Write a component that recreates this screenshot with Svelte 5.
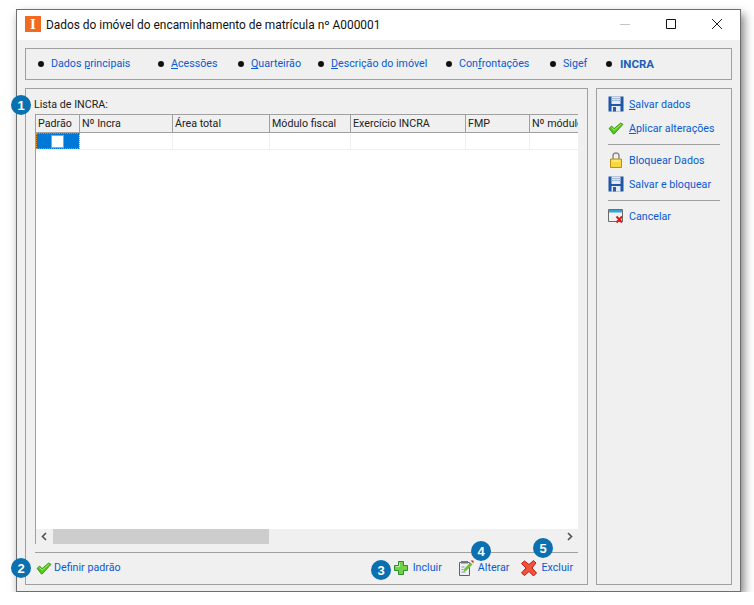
<script>
  const tabs = [
    { label: 'Dados principais', key: 'p', keyAt: 6, width: 120 },
    { label: 'Acessões', key: 'A', keyAt: 0, width: 80 },
    { label: 'Quarteirão', key: 'Q', keyAt: 0, width: 80 },
    { label: 'Descrição do imóvel', key: 'D', keyAt: 0, width: 128 },
    { label: 'Confrontações', key: 'f', keyAt: 3, width: 104 },
    { label: 'Sigef', width: 56 },
    { label: 'INCRA', active: true, width: 60 }
  ];
  const columns = [
    { name: 'Padrão', width: 44 },
    { name: 'Nº Incra', width: 93 },
    { name: 'Área total', width: 97 },
    { name: 'Módulo fiscal', width: 81 },
    { name: 'Exercício INCRA', width: 115 },
    { name: 'FMP', width: 64 },
    { name: 'Nº módulos', width: 60 }
  ];
</script>

{#snippet floppy()}
  <svg class="ico" viewBox="0 0 16 16">
    <path d="M0.5 0.500h15v15h-15z" fill="#1f56a8" />
    <path d="M3.500 0.500h9v7.500h-9z" fill="#e4e9f3" />
    <path d="M3.500 2.500h9M3.500 4.500h9" stroke="#a4b4d0" />
    <path d="M3.500 10h9v5.500h-9z" fill="#e6e9ef" />
    <path d="M5 11h3v4.500H5z" fill="#2d5da8" />
  </svg>
{/snippet}

{#snippet check()}
  <svg class="ico" viewBox="0 0 16 16">
    <path d="M1 8.500l2.600-2.500 2.500 2.600L12.600 3l2.400 1.300-8.800 9.700h-.8z" fill="#52c81a" stroke="#2c8c10" stroke-width=".8" />
    <path d="M3.500 7.500l2.600 2.700 6.800-6" fill="none" stroke="#a8ee60" />
  </svg>
{/snippet}

<div class="window">
  <div class="titlebar">
    <span class="app-icon">I</span>
    <span class="title">Dados do imóvel do encaminhamento de matrícula nº A000001</span>
    <div class="controls">
      <svg width="12" height="12" viewBox="0 0 12 12"><path d="M1 6.500h10" stroke="#c4c4c4" /></svg>
      <svg width="12" height="12" viewBox="0 0 12 12"><path d="M1.500 1.500h9v9h-9z" fill="none" stroke="#111" /></svg>
      <svg width="12" height="12" viewBox="0 0 12 12"><path d="M1 1l10 10M11 1L1 11" stroke="#222" /></svg>
    </div>
  </div>

  <div class="body">
    <nav class="panel tabs">
      {#each tabs as tab}
        <div class="tab" style="width: {tab.width}px">
          <span class="dot"></span>
          {#if tab.active}
            <b class="link">{tab.label}</b>
          {:else if tab.key}
            <span class="link">{tab.label.slice(0, tab.keyAt)}<u>{tab.key}</u>{tab.label.slice(tab.keyAt + 1)}</span>
          {:else}
            <span class="link">{tab.label}</span>
          {/if}
        </div>
      {/each}
    </nav>

    <div class="main">
      <section class="panel content">
        <div class="caption">Lista de INCRA:</div>
        <div class="grid">
          <div class="grid-head">
            {#each columns as col}
              <div class="th" style="width: {col.width}px">{col.name}</div>
            {/each}
          </div>
          <div class="grid-row">
            {#each columns as col, i}
              <div class="td" class:selected={i === 0} style="width: {col.width}px">
                {#if i === 0}<span class="checkbox"></span>{/if}
              </div>
            {/each}
          </div>
          <div class="grid-empty"></div>
          <div class="hscroll">
            <svg class="arrow" viewBox="0 0 17 15"><path d="M10 4L6.500 7.500 10 11" fill="none" stroke="#505050" stroke-width="1.600" /></svg>
            <div class="track"><div class="thumb"></div></div>
            <svg class="arrow" viewBox="0 0 17 15"><path d="M7 4l3.500 3.500L7 11" fill="none" stroke="#505050" stroke-width="1.600" /></svg>
          </div>
        </div>
        <div class="footer">
          <div class="action first">
            {@render check()}
            <span class="link">Definir padrão</span>
          </div>
          <div class="action push">
            <svg class="ico" viewBox="0 0 16 16">
              <path d="M5.500 1.500h5v4h4v5h-4v4h-5v-4h-4v-5h4z" fill="#6fd24a" stroke="#2f8f2a" />
              <path d="M6.500 3v3.500H3" fill="none" stroke="#bdf09c" />
            </svg>
            <span class="link">Incluir</span>
          </div>
          <div class="action">
            <svg class="ico" viewBox="0 0 16 16">
              <path d="M1.500 2.500h10v13h-10z" fill="#eef0f6" stroke="#5a5f86" />
              <path d="M3 1h7v2.500H3z" fill="#777" />
              <path d="M3.500 7h3M3.500 9.500h2M3.500 12h4" stroke="#8a8fb0" />
              <path d="M5.500 12l1-3.500 6-6 2 2-6 6z" fill="#6cc23a" />
              <path d="M12.500 .5h3v3z" fill="#d8262c" />
            </svg>
            <span class="link">Alterar</span>
          </div>
          <div class="action last">
            <svg class="ico" viewBox="0 0 16 16">
              <path d="M.5 3.500L3.500 1 8 4.500 12.500 .5 15 3l-4 5 4.500 5-3 3L8 11.500 3.500 15.500l-3-2.500L5 8z" fill="#f0523a" stroke="#c01a12" />
            </svg>
            <span class="link">Excluir</span>
          </div>
        </div>
      </section>

      <aside class="panel side">
        <div class="side-item">
          {@render floppy()}
          <span class="link"><u>S</u>alvar dados</span>
        </div>
        <div class="side-item">
          {@render check()}
          <span class="link"><u>A</u>plicar alterações</span>
        </div>
        <hr />
        <div class="side-item">
          <svg class="ico" viewBox="0 0 16 16">
            <path d="M5 7V4a3 3 0 0 1 6 0v3" fill="none" stroke="#8d8d8d" stroke-width="1.500" />
            <path d="M2.500 7h11v8.500h-11z" fill="#f7d93a" stroke="#b8901a" />
            <path d="M4 9h8" stroke="#fff3a8" />
          </svg>
          <span class="link">Bloquear Dados</span>
        </div>
        <div class="side-item">
          {@render floppy()}
          <span class="link">Salvar e bloquear</span>
        </div>
        <hr />
        <div class="side-item">
          <svg class="ico" viewBox="0 0 16 16">
            <path d="M.5 1.500h14v12H.5z" fill="#f2f2f2" stroke="#6b6b6b" />
            <path d="M1 2h13v2.500H1z" fill="#35a4dc" />
            <path d="M8.500 8.500l5.500 6M14 8.500l-5.500 6" stroke="#e01818" stroke-width="2" />
          </svg>
          <span class="link">Cancelar</span>
        </div>
      </aside>
    </div>
  </div>

  <span class="badge b1">1</span>
  <span class="badge b2">2</span>
  <span class="badge b3">3</span>
  <span class="badge b4">4</span>
  <span class="badge b5">5</span>
</div>

<style>
  :global(body) {
    background: #fff;
  }

  .window {
    position: relative;
    box-sizing: border-box;
    width: 725px;
    height: 583px;
    margin: 9px 0 0 16px;
    background: #f0f0f0;
    border: 1px solid #6e6e6e;
    box-shadow: 3px 5px 9px rgba(0, 0, 0, 0.5);
    font-family: Roboto, 'Noto Sans', sans-serif;
    font-size: 10.7px;
    color: #222;
  }

  .titlebar {
    box-sizing: border-box;
    display: flex;
    align-items: center;
    height: 30px;
    padding: 0 0 2px 8px;
    background: #fff;
  }

  .app-icon {
    display: flex;
    align-items: center;
    justify-content: center;
    width: 16px;
    height: 16px;
    margin-right: 5px;
    background: #f26a21;
    color: #fff;
    font-family: 'Liberation Serif', serif;
    font-weight: bold;
    font-size: 15px;
  }

  .title {
    padding-top: 2px;
    font-size: 11.9px;
    color: #111;
  }

  .controls {
    display: flex;
    gap: 34px;
    margin-left: auto;
    padding-right: 17px;
  }

  .body {
    padding: 8px 8px 7px;
  }

  .panel {
    box-sizing: border-box;
    border: 1px solid #a0a0a0;
  }

  .tabs {
    display: flex;
    align-items: center;
    height: 32px;
    padding: 0 0 1px 12px;
  }

  .tab {
    display: flex;
    align-items: center;
    gap: 7px;
    white-space: nowrap;
  }

  .dot {
    width: 6px;
    height: 6px;
    border-radius: 50%;
    background: #111;
  }

  .link {
    color: #0a5ad0;
  }

  b.link {
    margin-left: 1px;
    font-size: 11.5px;
    color: #1a5eb8;
  }

  .main {
    display: flex;
    gap: 8px;
    margin-top: 8px;
  }

  .content {
    display: flex;
    flex-direction: column;
    width: 563px;
    height: 497px;
    padding: 7px 9px 0;
  }

  .caption {
    height: 18px;
    line-height: 17px;
    margin-left: -1px;
    color: #222;
  }

  .grid {
    display: flex;
    flex-direction: column;
    height: 429px;
    overflow: hidden;
    background: #fff;
    border-top: 1px solid #a0a0a0;
    border-left: 1px solid #a0a0a0;
  }

  .grid-head {
    display: flex;
    flex: none;
    height: 17px;
    background: #f0f0f0;
    border-bottom: 1px solid #a0a0a0;
  }

  .th {
    flex: none;
    box-sizing: border-box;
    padding-left: 2px;
    line-height: 17px;
    white-space: nowrap;
    overflow: hidden;
    border-right: 1px solid #a0a0a0;
  }

  .th:last-child {
    border-right: 0;
  }

  .grid-row {
    display: flex;
    flex: none;
    height: 16px;
    border-bottom: 1px solid #f0f0f0;
  }

  .td {
    flex: none;
    box-sizing: border-box;
    border-right: 1px solid #f0f0f0;
  }

  .td.selected {
    display: flex;
    align-items: center;
    justify-content: center;
    background: #0078d7;
    outline: 1px dotted #e08a20;
    outline-offset: -1px;
  }

  .checkbox {
    width: 11px;
    height: 11px;
    background: #fff;
    border: 1px solid #a0a0a0;
  }

  .grid-empty {
    flex: 1;
  }

  .hscroll {
    display: flex;
    flex: none;
    height: 15px;
    background: #f0f0f0;
  }

  .arrow {
    flex: none;
    width: 17px;
    height: 15px;
  }

  .track {
    flex: 1;
  }

  .thumb {
    width: 216px;
    height: 15px;
    background: #cdcdcd;
  }

  .footer {
    display: flex;
    align-items: center;
    height: 29px;
    margin-top: 8px;
    border-top: 1px solid #a0a0a0;
  }

  .action {
    display: flex;
    align-items: center;
    gap: 4px;
    margin-left: 16px;
    white-space: nowrap;
  }

  .action.first {
    gap: 2px;
    margin-left: 1px;
  }

  .action.push {
    margin-left: auto;
  }

  .action.last {
    margin-left: 12px;
    margin-right: 5px;
  }

  .ico {
    flex: none;
    width: 16px;
    height: 16px;
  }

  .side {
    width: 136px;
    height: 497px;
    padding: 3px 11px;
  }

  .side-item {
    display: flex;
    align-items: center;
    gap: 5px;
    height: 24px;
    white-space: nowrap;
  }

  hr {
    height: 1px;
    margin: 4px 0 3px;
    border: 0;
    background: #a0a0a0;
  }

  .badge {
    position: absolute;
    display: flex;
    align-items: center;
    justify-content: center;
    width: 20px;
    height: 20px;
    border-radius: 50%;
    background: #0a70b0;
    color: #fff;
    font-family: 'Liberation Sans', sans-serif;
    font-weight: bold;
    font-size: 13px;
  }

  .b1 { left: -6px; top: 85px; }
  .b2 { left: -6px; top: 548px; }
  .b3 { left: 354px; top: 550px; }
  .b4 { left: 454px; top: 531px; }
  .b5 { left: 516px; top: 528px; }
</style>
